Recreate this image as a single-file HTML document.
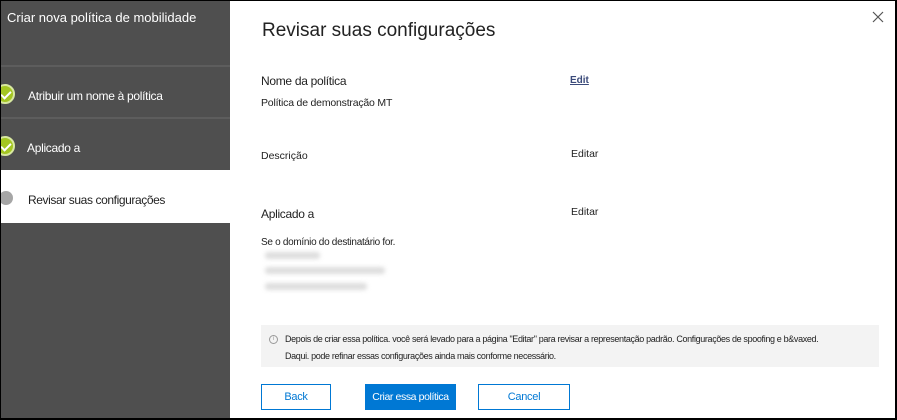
<!DOCTYPE html>
<html><head><style>
*{margin:0;padding:0;box-sizing:border-box}
body{width:897px;height:420px;overflow:hidden;background:#fff;font-family:"Liberation Sans",sans-serif;position:relative}
.frame{position:absolute;left:0;top:0;width:897px;height:420px;border:1px solid #000;border-right:2px solid #000;border-bottom:2px solid #000}
.left{position:absolute;left:1px;top:1px;width:229px;height:417px;background:#4f4f4f}
.t{position:absolute;font-size:12.5px;color:#fff;white-space:nowrap}
.div{position:absolute;left:0;width:229px;height:2px;background:#5d5d5d}
.chk{position:absolute;left:-6px;width:20px;height:20px;border-radius:50%;background:#a4c622;border:2px solid #d8e8a0}
.chk:after{content:"";position:absolute;left:6px;top:3px;width:4px;height:8px;border:solid #fff;border-width:0 2px 2px 0;transform:rotate(45deg)}
.r{position:absolute;font-size:11px;color:#222;white-space:nowrap}
.btn{position:absolute;top:384px;height:26px;border:1px solid #0078d4;font-size:11px;color:#0078d4;text-align:center;line-height:24px;background:#fff;letter-spacing:-0.3px;white-space:nowrap}
.blur{position:absolute;left:265px;height:7px;background:#ddd;filter:blur(2px);border-radius:3px}
</style></head><body>
<div class="left">
<div class="t" style="left:6px;top:9px;font-size:13px">Criar nova política de mobilidade</div>
<div class="div" style="top:64px"></div>
<div class="chk" style="top:83px"></div>
<div class="t" style="left:27px;top:88px;font-size:12px;letter-spacing:-0.3px">Atribuir um nome à política</div>
<div class="div" style="top:116px"></div>
<div class="chk" style="top:135px"></div>
<div class="t" style="left:26px;top:140px;font-size:12px;letter-spacing:-0.3px">Aplicado a</div>
<div style="position:absolute;left:0;top:169px;width:229px;height:53px;background:#fff"></div>
<div style="position:absolute;left:-2px;top:190px;width:14px;height:14px;border-radius:50%;background:#a6a6a6"></div>
<div class="t" style="left:27px;top:192px;font-size:12px;color:#222;letter-spacing:-0.4px">Revisar suas configurações</div>
</div>
<div style="position:absolute;left:262px;top:20px;font-size:19px;color:#222">Revisar suas configurações</div>
<svg style="position:absolute;left:872px;top:11px" width="12" height="12"><path d="M1 1L11 11M11 1L1 11" stroke="#555" stroke-width="1.2"/></svg>
<div class="r" style="left:261px;top:74px;font-size:12px;letter-spacing:-0.3px">Nome da política</div>
<div class="r" style="left:570px;top:75px;color:#3a4a7a;text-decoration:underline;font-weight:bold;font-size:10px">Edit</div>
<div class="r" style="left:261px;top:97px;font-size:10.5px;letter-spacing:-0.2px">Política de demonstração MT</div>
<div class="r" style="left:261px;top:150px;font-size:10.5px">Descrição</div>
<div class="r" style="left:571px;top:148px;font-size:10.5px">Editar</div>
<div class="r" style="left:261px;top:207px;font-size:12px;letter-spacing:-0.3px">Aplicado a</div>
<div class="r" style="left:571px;top:206px;font-size:10.5px">Editar</div>
<div class="r" style="left:261px;top:237px;font-size:10px;letter-spacing:-0.3px">Se o domínio do destinatário for.</div>
<div class="blur" style="top:252px;width:55px"></div>
<div class="blur" style="top:267px;width:120px"></div>
<div class="blur" style="top:283px;width:102px"></div>
<div style="position:absolute;left:261px;top:325px;width:618px;height:42px;background:#f3f3f3"></div>
<div style="position:absolute;left:269px;top:335px;width:9px;height:9px;border:1px solid #999;border-radius:50%;font-size:6px;line-height:7px;text-align:center;color:#999">i</div>
<div class="r" style="left:285px;top:331px;font-size:9px;line-height:17px;letter-spacing:-0.35px">Depois de criar essa política. você será levado para a página "Editar" para revisar a representação padrão. Configurações de spoofing e b&amp;vaxed.<br>Daqui. pode refinar essas configurações ainda mais conforme necessário.</div>
<div class="btn" style="left:261px;width:70px">Back</div>
<div class="btn" style="left:365px;width:91px;background:#0078d4;color:#fff;font-size:10.5px;letter-spacing:-0.4px">Criar essa política</div>
<div class="btn" style="left:478px;width:92px">Cancel</div>
<div class="frame"></div>
</body></html>
